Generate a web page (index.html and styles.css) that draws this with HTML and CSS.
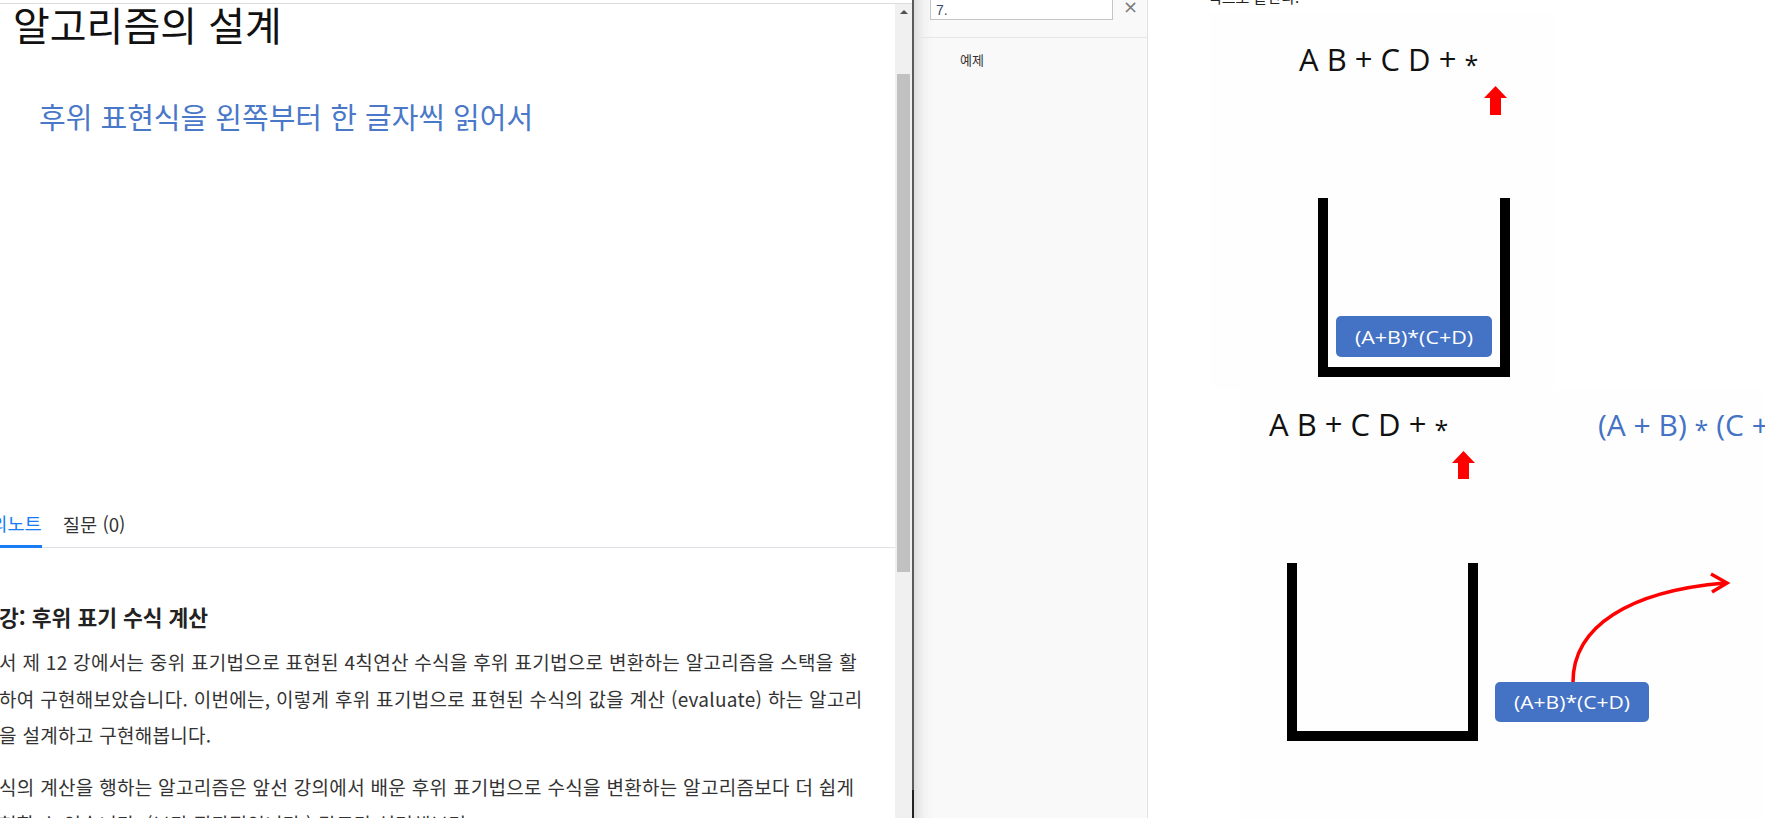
FILE: index.html
```html
<!DOCTYPE html>
<html lang="ko">
<head>
<meta charset="utf-8">
<title>알고리즘의 설계</title>
<link rel="stylesheet" href="styles.css">
</head>
<body>
<div class="page">
  <div class="left">
    <div class="left-top"></div>
    <div class="left-body">
      <div class="main">
        <div class="video">
          <div class="slide-title">알고리즘의 설계</div>
          <div class="slide-sub">후위 표현식을 왼쪽부터 한 글자씩 읽어서</div>
        </div>
        <div class="tabs">
          <div class="tab active">강의노트</div>
          <div class="tab">질문 (0)</div>
        </div>
        <div class="content">
          <h3 class="lec-head">강: 후위 표기 수식 계산</h3>
          <p class="para">서 제 12 강에서는 중위 표기법으로 표현된 4칙연산 수식을 후위 표기법으로 변환하는 알고리즘을 스택을 활<br>하여 구현해보았습니다. 이번에는, 이렇게 후위 표기법으로 표현된 수식의 값을 계산 (evaluate) 하는 알고리<br>을 설계하고 구현해봅니다.</p>
          <p class="para">식의 계산을 행하는 알고리즘은 앞선 강의에서 배운 후위 표기법으로 수식을 변환하는 알고리즘보다 더 쉽게<br>현할 수 있습니다. (보다 직관적입니다.) 말로만 설명해보면,</p>
        </div>
      </div>
      <div class="scrollbar">
        <div class="sb-arrow"></div>
        <div class="sb-thumb"></div>
      </div>
    </div>
  </div>
  <div class="divider"></div>
  <div class="side">
    <div class="side-search">
      <div class="search-box">7.</div>
      <div class="search-close">×</div>
    </div>
    <div class="side-item">예제</div>
  </div>
  <div class="doc">
    <p class="doc-line">식으로 끝난다.</p>
    <svg class="slide1" width="344" height="378" viewBox="0 0 344 378" xmlns="http://www.w3.org/2000/svg">
      <rect x="0" y="0" width="344" height="378" fill="#fefefe"/>
      <text x="89" y="59" class="expr">A B + C D + <tspan class="ast" dy="3">*</tspan></text>
      <polygon points="285.5,74 297,86 291,86 291,103 280,103 280,86 274,86" fill="#ff0000"/>
      <path d="M113,186 V360 H295 V186" fill="none" stroke="#000" stroke-width="10"/>
      <rect x="126" y="304" width="156" height="41" rx="5" fill="#4472c4"/>
      <text x="204" y="332" class="box-text" text-anchor="middle" textLength="118" lengthAdjust="spacingAndGlyphs">(A+B)*(C+D)</text>
    </svg>
    <svg class="slide2" width="525" height="428" viewBox="0 0 525 428" xmlns="http://www.w3.org/2000/svg">
      <rect x="0" y="0" width="525" height="428" fill="#fefefe"/>
      <text x="29" y="46" class="expr">A B + C D + <tspan class="ast" dy="3">*</tspan></text>
      <polygon points="223.5,61 235,73 229,73 229,89 218,89 218,73 212,73" fill="#ff0000"/>
      <text x="358" y="46" class="expr-blue">(A + B) <tspan class="ast" dy="3">*</tspan><tspan dy="-3"> (C + D)</tspan></text>
      <path d="M52,173 V346 H233 V173" fill="none" stroke="#000" stroke-width="10"/>
      <rect x="255" y="292" width="154" height="40" rx="5" fill="#4472c4"/>
      <text x="332" y="319" class="box-text" text-anchor="middle" textLength="116" lengthAdjust="spacingAndGlyphs">(A+B)*(C+D)</text>
      <path d="M333,292 C333,236 390,201 485,193" fill="none" stroke="#ff0000" stroke-width="3.5"/>
      <path d="M471,184 L487,193 L472,202" fill="none" stroke="#ff0000" stroke-width="3.5" stroke-linejoin="miter"/>
    </svg>
  </div>
</div>
</body>
</html>
```

FILE: styles.css
```css
* { box-sizing: border-box; }
html, body { margin: 0; padding: 0; }
body {
  width: 1765px;
  height: 818px;
  overflow: hidden;
  background: #ffffff;
  font-family: "Noto Sans CJK KR", "Noto Sans", sans-serif;
  color: #333;
}
.page {
  display: flex;
  width: 1765px;
  height: 818px;
  overflow: hidden;
}

/* ---------- left column ---------- */
.left {
  width: 912px;
  flex: 0 0 912px;
  display: flex;
  flex-direction: column;
  height: 818px;
}
.left-top {
  height: 4px;
  flex: 0 0 4px;
  border-bottom: 1px solid #dcdcdc;
  background: #fff;
}
.left-body {
  flex: 1;
  display: flex;
  min-height: 0;
}
.main {
  width: 895px;
  flex: 0 0 895px;
  overflow: hidden;
  background: #fff;
}
.video {
  height: 494px;
  background: #fff;
}
.slide-title {
  font-size: 40px;
  line-height: 40px;
  padding-left: 13px;
  color: #111;
  white-space: nowrap;
}
.slide-sub {
  margin-top: 53px;
  font-size: 29px;
  line-height: 38px;
  padding-left: 39px;
  color: #4a78c8;
  white-space: nowrap;
}
.tabs {
  height: 50px;
  display: flex;
  align-items: stretch;
  border-bottom: 1px solid #dee2e6;
}
.tab {
  font-size: 18.7px;
  display: flex;
  align-items: center;
  padding-top: 2px;
  color: #333;
  white-space: nowrap;
}
.tab.active {
  margin-left: -27px;
  color: #1a7cf5;
  border-bottom: 3px solid #1a7cf5;
  margin-bottom: -1px;
  margin-right: 21px;
}
.content {
  margin-left: -1px;
}
.lec-head {
  margin: 54px 0 0 0;
  font-size: 21.5px;
  line-height: 30px;
  font-weight: 700;
  color: #222;
  white-space: nowrap;
}
.para {
  margin: 12px 0 0 0;
  font-size: 19px;
  letter-spacing: 0.3px;
  line-height: 36.5px;
  color: #333;
  white-space: nowrap;
}
.para + .para {
  margin-top: 15.5px;
}

/* scrollbar */
.scrollbar {
  width: 17px;
  flex: 0 0 17px;
  background: #f0f0f0;
  display: flex;
  flex-direction: column;
  align-items: center;
}
.sb-arrow {
  margin-top: 6px;
  width: 0;
  height: 0;
  border-left: 4px solid transparent;
  border-right: 4px solid transparent;
  border-bottom: 4px solid #505050;
}
.sb-thumb {
  margin-top: 60px;
  width: 13px;
  height: 498px;
  background: #c1c1c1;
}

.divider {
  width: 2px;
  flex: 0 0 2px;
  background: linear-gradient(to bottom, #5a5a5a 0, #5a5a5a 790px, #222 790px);
}

/* ---------- side panel ---------- */
.side {
  width: 234px;
  flex: 0 0 234px;
  background: linear-gradient(to right, #dedede 0px, #f3f3f3 10px, #f9f9f9 20px);
  border-right: 1px solid #e2e2e2;
}
.side-search {
  height: 38px;
  border-bottom: 1px solid #e6e6e6;
  display: flex;
  align-items: flex-start;
  padding-left: 16px;
}
.search-box {
  width: 183px;
  height: 30px;
  margin-top: -10px;
  background: #fff;
  border: 1px solid #c4c4c4;
  font-family: "Liberation Sans", Arial, sans-serif;
  font-size: 14px;
  line-height: 18px;
  padding: 10px 0 0 5px;
  color: #3a4a6a;
}
.search-close {
  margin-left: 10px;
  margin-top: -4px;
  font-family: "DejaVu Sans", sans-serif;
  font-size: 18px;
  line-height: 22px;
  color: #7a7a7a;
}
.side-item {
  font-size: 13px;
  line-height: 20px;
  margin-top: 12px;
  padding-left: 46px;
  color: #333;
}

/* ---------- document ---------- */
.doc {
  flex: 1;
  min-width: 0;
  overflow: hidden;
  background: #fff;
}
.doc-line {
  margin: -14px 0 0 60px;
  font-size: 15px;
  line-height: 22px;
  color: #222;
  white-space: nowrap;
}
.slide1 {
  display: block;
  margin: 4px 0 0 62px;
}
.slide2 {
  display: block;
  margin: 0 0 0 92px;
}
.expr {
  font-family: "Open Sans", "Liberation Sans", sans-serif;
  font-size: 31px;
  fill: #111;
}
.expr-blue {
  font-family: "Open Sans", "Liberation Sans", sans-serif;
  font-size: 30px;
  fill: #4472c4;
}
.ast {
  font-size: 25px;
}
.box-text {
  font-family: "Open Sans", "Liberation Sans", sans-serif;
  font-size: 19px;
  fill: #ffffff;
}
```
